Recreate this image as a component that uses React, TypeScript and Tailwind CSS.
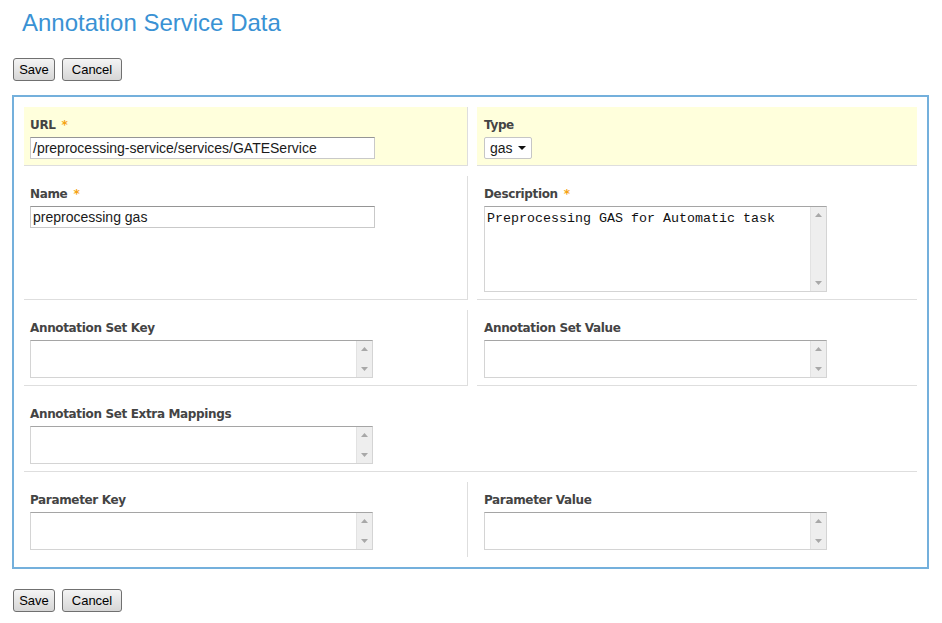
import type { ReactNode } from 'react';

function Button({ label, width }: { label: string; width: string }) {
  return (
    <button
      className={`${width} h-[23px] rounded-[3px] border border-[#707070] bg-linear-to-b from-[#f4f4f4] to-[#d6d6d6] text-[13px] leading-[21px] text-black font-['Liberation_Sans',Arial,sans-serif]`}
    >
      {label}
    </button>
  );
}

function Buttons() {
  return (
    <div className="flex gap-[7px]">
      <Button label="Save" width="w-[42px]" />
      <Button label="Cancel" width="w-[60px]" />
    </div>
  );
}

function Label({ text, required }: { text: string; required?: boolean }) {
  return (
    <div className="h-[16px] mb-[4px] flex items-start font-['DejaVu_Sans',Verdana,sans-serif] text-[12px] leading-[16px] font-bold tracking-[-0.35px] text-[#444]">
      {text}
      {required && <span className="ml-[6px] text-[#f5a312]">*</span>}
    </div>
  );
}

function Arrow({ up }: { up?: boolean }) {
  return (
    <svg width="7" height="4" viewBox="0 0 7 4" className="block">
      <path d={up ? 'M0 4 L3.5 0 L7 4 Z' : 'M0 0 L3.5 4 L7 0 Z'} fill="#a8a8a8" />
    </svg>
  );
}

function TextBox({ height, text }: { height: string; text?: string }) {
  return (
    <div className={`w-[343px] ${height} flex border border-[#d4d4d4] border-t-[#a5a5a5] bg-white`}>
      <div className="flex-1 pl-[2px] pt-[4px] font-['Liberation_Mono','Courier_New',monospace] text-[13.33px] leading-[16px] text-[#111]">
        {text}
      </div>
      <div className="w-[16px] bg-[#eeeeee] border-l border-[#e2e2e2] flex flex-col items-center justify-between py-[6px]">
        <Arrow up />
        <Arrow />
      </div>
    </div>
  );
}

function Input({ value }: { value: string }) {
  return (
    <div className="w-[345px] h-[22px] border border-[#c9c9c9] border-t-[#959595] bg-white pl-[2px] font-['Liberation_Sans',Arial,sans-serif] text-[14px] leading-[20px] text-[#1a1a1a]">
      {value}
    </div>
  );
}

function Select({ value }: { value: string }) {
  return (
    <div className="w-[48px] h-[22px] rounded-[2px] border border-[#c6c6c6] bg-white flex items-center pl-[5px] pr-[5px] justify-between font-['Liberation_Sans',Arial,sans-serif] text-[14px] text-[#1a1a1a]">
      <span className="leading-[20px]">{value}</span>
      <svg width="8" height="4" viewBox="0 0 8 4" className="block">
        <path d="M0 0 L4 4 L8 0 Z" fill="#111" />
      </svg>
    </div>
  );
}

interface CellProps {
  label?: string;
  required?: boolean;
  children?: ReactNode;
  className?: string;
}

function Cell({ label, required, children, className = '' }: CellProps) {
  return (
    <div className={`pt-[10px] ${className}`}>
      {label && <Label text={label} required={required} />}
      {children}
    </div>
  );
}

export default function App() {
  return (
    <div className="min-h-screen bg-white px-[12px] font-['Liberation_Sans',Arial,sans-serif]">
      <h1 className="pt-[8px] pl-[10px] text-[24px] leading-[30px] text-[#3a92d4]">
        Annotation Service Data
      </h1>

      <div className="mt-[20px] pl-[1px]">
        <Buttons />
      </div>

      <div className="mt-[14px] w-[917px] border-2 border-[#74b0dc] px-[10px] pt-[10px] pb-[10px]">
        <div className="grid grid-cols-[444px_440px] gap-x-[9px] gap-y-[10px]">
          {/* Row 1 */}
          <Cell label="URL" required className="bg-[#ffffdc] pl-[6px] pb-[6px] border-b border-r border-[#dedede]">
            <Input value="/preprocessing-service/services/GATEService" />
          </Cell>
          <Cell label="Type" className="bg-[#ffffdc] pl-[7px] pb-[6px] border-b border-[#dedede]">
            <Select value="gas" />
          </Cell>

          {/* Row 2 */}
          <Cell label="Name" required className="pl-[6px] pb-[7px] border-b border-r border-[#dedede]">
            <Input value="preprocessing gas" />
          </Cell>
          <Cell label="Description" required className="pl-[7px] pb-[7px] border-b border-[#dedede]">
            <TextBox height="h-[86px]" text="Preprocessing GAS for Automatic task" />
          </Cell>

          {/* Row 3 */}
          <Cell label="Annotation Set Key" className="pl-[6px] pb-[7px] border-b border-r border-[#dedede]">
            <TextBox height="h-[38px]" />
          </Cell>
          <Cell label="Annotation Set Value" className="pl-[7px] pb-[7px] border-b border-[#dedede]">
            <TextBox height="h-[38px]" />
          </Cell>

          {/* Row 4 */}
          <Cell label="Annotation Set Extra Mappings" className="col-span-2 pl-[6px] pb-[7px] border-b border-[#dedede]">
            <TextBox height="h-[38px]" />
          </Cell>

          {/* Row 5 */}
          <Cell label="Parameter Key" className="pl-[6px] pb-[7px] border-r border-[#dedede]">
            <TextBox height="h-[38px]" />
          </Cell>
          <Cell label="Parameter Value" className="pl-[7px] pb-[7px]">
            <TextBox height="h-[38px]" />
          </Cell>
        </div>
      </div>

      <div className="mt-[20px] pl-[1px]">
        <Buttons />
      </div>
    </div>
  );
}
